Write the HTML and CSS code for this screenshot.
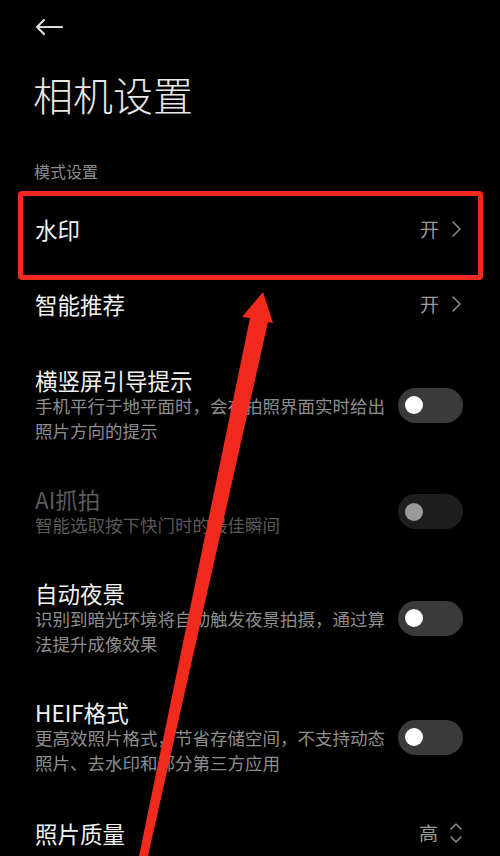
FILE: index.html
```html
<!DOCTYPE html>
<html lang="zh-CN">
<head>
<meta charset="utf-8">
<link rel="stylesheet" href="styles.css">
</head>
<body>
<div class="page">
  <div class="topbar">
    <svg class="back" width="30" height="18" viewBox="0 0 30 18"><path d="M28 9H3M10 2L3 9L10 16" fill="none" stroke="#dcdcdc" stroke-width="2.2" stroke-linecap="round" stroke-linejoin="round"/></svg>
  </div>
  <h1 class="title">相机设置</h1>
  <div class="section-label">模式设置</div>

  <div class="row simple">
    <div class="row-title">水印</div>
    <div class="value">开<svg class="chev" width="12" height="18" viewBox="0 0 12 18"><path d="M2 2L9 9L2 16" fill="none" stroke="#8a8a8a" stroke-width="1.6" stroke-linecap="round" stroke-linejoin="round"/></svg></div>
  </div>
  <div class="row simple">
    <div class="row-title">智能推荐</div>
    <div class="value">开<svg class="chev" width="12" height="18" viewBox="0 0 12 18"><path d="M2 2L9 9L2 16" fill="none" stroke="#8a8a8a" stroke-width="1.6" stroke-linecap="round" stroke-linejoin="round"/></svg></div>
  </div>

  <div class="row toggle-row">
    <div class="text">
      <div class="row-title">横竖屏引导提示</div>
      <div class="sub">手机平行于地平面时，会在拍照界面实时给出照片方向的提示</div>
    </div>
    <div class="switch"><span class="knob"></span></div>
  </div>
  <div class="row toggle-row disabled">
    <div class="text">
      <div class="row-title">AI抓拍</div>
      <div class="sub">智能选取按下快门时的最佳瞬间</div>
    </div>
    <div class="switch"><span class="knob"></span></div>
  </div>
  <div class="row toggle-row">
    <div class="text">
      <div class="row-title">自动夜景</div>
      <div class="sub">识别到暗光环境将自动触发夜景拍摄，通过算法提升成像效果</div>
    </div>
    <div class="switch"><span class="knob"></span></div>
  </div>
  <div class="row toggle-row">
    <div class="text">
      <div class="row-title">HEIF格式</div>
      <div class="sub">更高效照片格式，节省存储空间，不支持动态照片、去水印和部分第三方应用</div>
    </div>
    <div class="switch"><span class="knob"></span></div>
  </div>
  <div class="row simple last">
    <div class="row-title">照片质量</div>
    <div class="value">高<svg class="updown" width="14" height="24" viewBox="0 0 14 24"><path d="M2 8L7 3L12 8M2 16L7 21L12 16" fill="none" stroke="#8a8a8a" stroke-width="1.6" stroke-linecap="round" stroke-linejoin="round"/></svg></div>
  </div>

  <div class="highlight-box"></div>
  <svg class="annot-arrow" width="500" height="856" viewBox="0 0 500 856">
    <polygon points="139,856 250,318 242,317 263,292 273,323 268,322 148,856" fill="#f2291d"/>
  </svg>
</div>
</body>
</html>
```

FILE: styles.css
```css
html, body {
  margin: 0;
  padding: 0;
  background: #000;
}
body {
  font-family: "Noto Sans CJK SC", "Noto Sans", sans-serif;
  color: #f0f0f0;
}
.page {
  position: relative;
  width: 500px;
  height: 856px;
  overflow: hidden;
  background: #000;
}
.topbar {
  height: 54px;
  display: flex;
  align-items: center;
  padding-left: 34px;
}
.back {
  display: block;
}
.title {
  margin: 0;
  height: 80px;
  line-height: 80px;
  padding-left: 33px;
  font-size: 40px;
  font-weight: 300;
  color: #e8e8e8;
  letter-spacing: 0;
}
.section-label {
  height: 57px;
  box-sizing: border-box;
  padding-top: 28px;
  padding-left: 34px;
  font-size: 16px;
  line-height: 18px;
  color: #8c8c8c;
}
.row {
  display: flex;
  align-items: center;
  justify-content: space-between;
  padding-left: 35px;
  padding-right: 37px;
}
.row.simple {
  height: 75px;
}
.row.simple.last {
  height: 81px;
}
.row-title {
  font-size: 22.5px;
  line-height: 26px;
  color: #f2f2f2;
}
.value {
  display: flex;
  align-items: center;
  font-size: 19px;
  color: #9a9a9a;
}
.chev {
  display: block;
  margin-left: 12px;
}
.updown {
  display: block;
  margin-left: 11px;
}
.toggle-row {
  padding-top: 26px;
  padding-bottom: 17px;
}
.text {
  width: 356px;
}
.sub {
  font-size: 17.5px;
  line-height: 25px;
  color: #8e8e8e;
}
.switch {
  width: 65px;
  height: 35px;
  border-radius: 18px;
  background: #3a3a3a;
  display: flex;
  align-items: center;
  box-sizing: border-box;
  padding-left: 7px;
  flex-shrink: 0;
}
.knob {
  width: 18px;
  height: 18px;
  border-radius: 50%;
  background: #fff;
}
.disabled .row-title {
  color: #5c5c5c;
}
.disabled .sub {
  color: #595959;
}
.disabled .switch {
  background: #1e1e1e;
}
.disabled .knob {
  background: #9a9a9a;
}
.highlight-box {
  position: absolute;
  left: 18px;
  top: 191px;
  width: 465px;
  height: 89px;
  box-sizing: border-box;
  border: 5px solid #f2291d;
  border-radius: 4px;
}
.annot-arrow {
  position: absolute;
  left: 0;
  top: 0;
}
```
